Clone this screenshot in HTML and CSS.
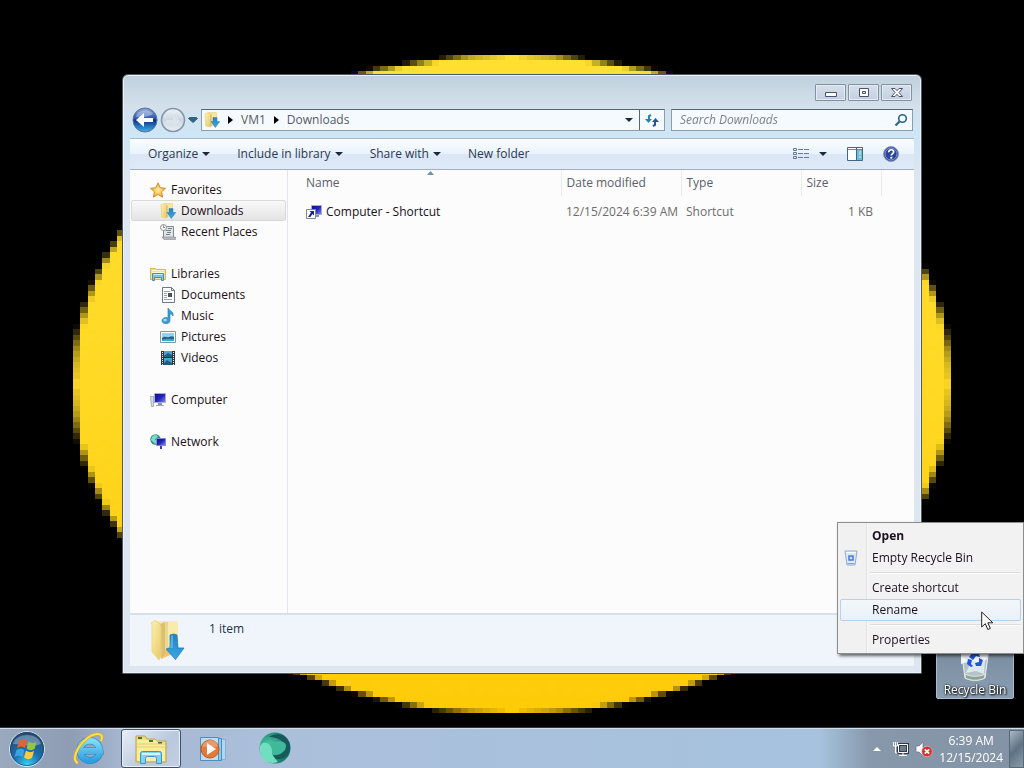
FILE: index.html
```
<!DOCTYPE html>
<html lang="en">
<head>
    <meta charset="UTF-8">
    <meta name="viewport" content="width=device-width, initial-scale=1.0">
    <title>Downloads</title>
    <link rel="stylesheet" href="styles.css">
</head>
<body>
    <svg class="sprite" aria-hidden="true">
        <defs>
            <linearGradient id="g-folder" x1="0" y1="0" x2="1" y2="1">
                <stop offset="0" stop-color="#fdf3b4"/><stop offset="1" stop-color="#e8c965"/>
            </linearGradient>
            <linearGradient id="g-arrow" x1="0" y1="0" x2="0" y2="1">
                <stop offset="0" stop-color="#2a7fc0"/><stop offset="1" stop-color="#35aae8"/>
            </linearGradient>
            <linearGradient id="g-back" x1="0" y1="0" x2="0" y2="1">
                <stop offset="0" stop-color="#8aa8d8"/><stop offset=".45" stop-color="#2c55a8"/>
                <stop offset=".5" stop-color="#0e2f86"/><stop offset="1" stop-color="#3cb4ee"/>
            </linearGradient>
            <linearGradient id="g-fwd" x1="0" y1="0" x2="0" y2="1">
                <stop offset="0" stop-color="#eef3f8"/><stop offset=".5" stop-color="#cbd7e2"/><stop offset="1" stop-color="#e8f0f6"/>
            </linearGradient>
            <linearGradient id="g-screen" x1="0" y1="0" x2="1" y2="1">
                <stop offset="0" stop-color="#10109a"/><stop offset=".5" stop-color="#2222b8"/><stop offset="1" stop-color="#8a90ee"/>
            </linearGradient>
            <radialGradient id="g-orb" cx=".5" cy=".95" r=".9">
                <stop offset="0" stop-color="#35d0f5"/><stop offset=".45" stop-color="#1c6fae"/><stop offset="1" stop-color="#274a72"/>
            </radialGradient>
            <linearGradient id="g-ie" x1="0" y1="0" x2="0" y2="1">
                <stop offset="0" stop-color="#7fdcf8"/><stop offset="1" stop-color="#2d9fe0"/>
            </linearGradient>
            <radialGradient id="g-green" cx=".3" cy=".5" r=".7">
                <stop offset="0" stop-color="#57d8b4"/><stop offset="1" stop-color="#0f6e60"/>
            </radialGradient>
            <radialGradient id="g-star" cx=".5" cy=".5" r=".5">
                <stop offset="0" stop-color="#fff0a0"/><stop offset="1" stop-color="#fba92c"/>
            </radialGradient>
        </defs>
        <symbol id="i-downloads" viewBox="0 0 16 16">
            <path d="M5 .5h7.500v13H5z" fill="#f7e796" stroke="#e2cb76" stroke-width=".5"/>
            <path d="M1 1.500 5 .5 6.500 3v12L1.500 14z" fill="url(#g-folder)" stroke="#dfc87a" stroke-width=".5"/>
            <path d="M6.500 3 7.500 2v12l-1 1z" fill="#cfae5c"/>
            <path d="M9 5.500h4v4h2.800L11.300 15.500 7 9.500h2z" fill="url(#g-arrow)" stroke="#2f7fb8" stroke-width=".5"/>
        </symbol>
        <symbol id="i-libraries" viewBox="0 0 16 16">
            <path d="M.5 2.500h5l1 1h9v10H.5z" fill="#f3e18b" stroke="#cbb765"/>
            <path d="M2 4.500h12M2 6.500h12" stroke="#fff8cf"/>
            <path d="M2.500 7.500h11v7h-2v-3h-7v3h-2z" fill="#7fc3dd" stroke="#4f8fae"/>
            <path d="M3.500 8.500h9" stroke="#c5ecf4"/>
        </symbol>
        <symbol id="i-computer" viewBox="0 0 16 16">
            <path d="M.5 4.500h3v10h-2z" fill="#d7dae5" stroke="#8f94a8" stroke-width=".7"/>
            <path d="M4.500 1.500h11v9h-11z" fill="url(#g-screen)" stroke="#a8add0"/>
            <path d="M8 11h4v2H8z" fill="#8d93a8"/>
            <path d="M6 13.500h8" stroke="#a5aabb"/>
        </symbol>
    </svg>

    <main class="desktop">
        <canvas class="wallpaper" id="wallpaper" width="140" height="140"></canvas>

        <button class="desktop-icon" type="button">
            <svg width="48" height="48" viewBox="0 0 48 48" aria-hidden="true">
                <path d="M9 7h30l-5 37c-5 3-15 3-20 0z" fill="#cbd6dd" fill-opacity=".7" stroke="#e5eef2"/>
                <path d="m10 10 9 5 6-7 6 8 7-5-2 14-6 5-10-3-10 3z" fill="#f1f6f8"/>
                <path d="m13 22 6 8-4 9 10-2 8 3 1-14-6 3z" fill="#dfe8ea"/>
                <path d="m18 23 4-5 6 1 1 4-4-1-3 4zM28 24l4 2-2 6h-5l-1-3 4-1zM17 25l4 1-1 4 2 2-2 1-4-3z" fill="#2154d8"/>
                <path d="M14 40c5 3 15 3 20 0l-.5 4c-5 3-14 3-19 0z" fill="#8fa393" stroke="#dce8e0"/>
            </svg>
            <span>Recycle Bin</span>
        </button>

        <section class="window" aria-label="Downloads">
            <div class="titlebar">
                <button type="button" aria-label="Minimize">
                    <svg width="14" height="10" viewBox="0 0 14 10"><path d="M1.500 4.500h11v4h-11z" fill="#fff" stroke="#4a5270"/></svg>
                </button>
                <button type="button" aria-label="Maximize">
                    <svg width="14" height="10" viewBox="0 0 14 10"><path d="M2.500.5h9v8h-9z" fill="#fff" stroke="#4a5270"/><path d="M5.500 3.500h3v2h-3z" fill="#dfe6ef" stroke="#4a5270"/></svg>
                </button>
                <button type="button" aria-label="Close">
                    <svg width="14" height="10" viewBox="0 0 14 10"><path d="M1.500.5h3.500L7 2.700 9 .5h3.500L9 4.500l3.500 4H9L7 6.300 5 8.500H1.500l3.500-4z" fill="#fff" stroke="#4a5270"/></svg>
                </button>
            </div>

            <div class="navbar">
                <div class="travel">
                    <button type="button" aria-label="Back">
                        <svg width="26" height="26" viewBox="0 0 26 26">
                            <circle cx="13" cy="13" r="12" fill="url(#g-back)" stroke="#5a6f94"/>
                            <path d="M5 7c4-5 12-5 16 0-5 3-11 4-17 3z" fill="#fff" fill-opacity=".35"/>
                            <path d="m4 13 8-7v5h9v4h-9v5z" fill="#fff"/>
                        </svg>
                    </button>
                    <button type="button" aria-label="Forward" disabled>
                        <svg width="26" height="26" viewBox="0 0 26 26">
                            <circle cx="13" cy="13" r="11.500" fill="url(#g-fwd)" stroke="#8494a5" stroke-width="1.500"/>
                            <path d="m20 14-7 6v-4H6v-3h7V9z" fill="#dbe4ec"/>
                        </svg>
                    </button>
                    <button type="button" aria-label="Recent pages">
                        <svg width="10" height="6" viewBox="0 0 10 6"><path d="M.5 1.500 2 .5h6l1.500 1L5 5.500z" fill="#236b83" stroke="#3d5c78"/></svg>
                    </button>
                </div>
                <div class="address">
                    <svg class="icon" aria-hidden="true"><use href="#i-downloads"/></svg>
                    <svg class="crumb-arrow" viewBox="0 0 5 8" aria-hidden="true"><path d="M0 0v8l5-4z"/></svg>
                    <button type="button">VM1</button>
                    <svg class="crumb-arrow" viewBox="0 0 5 8" aria-hidden="true"><path d="M0 0v8l5-4z"/></svg>
                    <button type="button">Downloads</button>
                    <button class="address-drop" type="button" aria-label="Previous locations"><svg class="down" viewBox="0 0 8 4"><path d="M0 0h8L4 4z"/></svg></button>
                    <button class="refresh" type="button" aria-label="Refresh">
                        <svg width="14" height="14" viewBox="0 0 14 14" fill="none" stroke-width="2">
                            <path d="M6 2 4 3v5" stroke="#26889a"/><path d="M0 6h7l-3.500 4z" fill="#26889a"/>
                            <path d="m8 13 2-1V7" stroke="#2453a0"/><path d="M7 9h7l-3.500-4z" fill="#2453a0"/>
                        </svg>
                    </button>
                </div>
                <label class="search">
                    <input type="text" placeholder="Search Downloads" aria-label="Search Downloads">
                    <svg width="14" height="14" viewBox="0 0 14 14" fill="none" aria-hidden="true">
                        <circle cx="8.500" cy="5.500" r="3.800" stroke="#28638a" stroke-width="1.600"/>
                        <path d="M5.500 8.500 1.500 12.500" stroke="#28638a" stroke-width="2.200"/>
                    </svg>
                </label>
            </div>

            <div class="commandbar">
                <button type="button">Organize <svg class="down" viewBox="0 0 8 4"><path d="M0 0h8L4 4z"/></svg></button>
                <button type="button">Include in library <svg class="down" viewBox="0 0 8 4"><path d="M0 0h8L4 4z"/></svg></button>
                <button type="button">Share with <svg class="down" viewBox="0 0 8 4"><path d="M0 0h8L4 4z"/></svg></button>
                <button type="button">New folder</button>
                <div class="view-tools">
                    <button type="button" aria-label="Change your view">
                        <svg width="16" height="14" viewBox="0 0 16 14" fill="none">
                            <path d="M.5 1.500h3v2h-3zM.5 5.500h3v2h-3zM.5 9.500h3v2h-3z" stroke="#68788e"/>
                            <path d="M5 2.500h5m1 0h5M5 6.500h5m1 0h5M5 10.500h5m1 0h5" stroke="#68788e"/>
                        </svg>
                        <svg class="down" viewBox="0 0 8 4"><path d="M0 0h8L4 4z"/></svg>
                    </button>
                    <button type="button" aria-label="Show the preview pane">
                        <svg width="16" height="14" viewBox="0 0 16 14">
                            <path d="M.5.5h15v13H.5z" fill="#fff" stroke="#40668c"/>
                            <path d="M1 2.500h14" stroke="#6c8cab"/><path d="M10 3h5v10h-5z" fill="#6fc0cb"/><path d="M9.500 1v12" stroke="#40668c"/><path d="M12 5h2M12 7h2M12 10h2" stroke="#cdeef0"/>
                        </svg>
                    </button>
                    <button type="button" aria-label="Get help">
                        <svg width="16" height="16" viewBox="0 0 16 16">
                            <circle cx="8" cy="8" r="7.500" fill="#2b4699" stroke="#8c9cc0"/>
                            <circle cx="8" cy="8" r="6" fill="none" stroke="#a6b8e2" stroke-width=".7"/>
                            <path d="M5.700 6.200c0-3.200 5-3.200 5-.4 0 1.900-2.400 1.700-2.400 3.800" fill="none" stroke="#fff" stroke-width="1.700"/>
                            <path d="M7.300 10.800h2v1.800h-2z" fill="#fff"/>
                        </svg>
                    </button>
                </div>
            </div>

            <div class="content">
                <nav class="tree">
                    <ul>
                        <li><a href="#favorites">
                            <svg class="icon" viewBox="0 0 16 16"><path d="m8 .8 2.200 4.900 5.300.6-4 3.600 1.200 5.300L8 12.500l-4.700 2.700 1.200-5.300-4-3.600 5.300-.6z" fill="url(#g-star)" stroke="#c98526" stroke-width=".9"/></svg>
                            Favorites</a>
                            <ul>
                                <li><a class="selected" href="#downloads"><svg class="icon"><use href="#i-downloads"/></svg>Downloads</a></li>
                                <li><a href="#recent">
                                    <svg class="icon" viewBox="0 0 16 16"><path d="M3.500 5v9.500H13.500V2.500H5z" fill="#dfe4e8" stroke="#868c92"/><circle cx="3.500" cy="3.500" r="3" fill="#f4f7f8" stroke="#8a9197"/><path d="M3.500 1.500v2H5M8 4.500h4M6 6.500h5M7 8.500h4M6 10.500h4" fill="none" stroke="#7b8289"/><path d="M2 13h13.500v2.500H4z" fill="#b4babf" stroke="#868c92" stroke-width=".6"/></svg>
                                    Recent Places</a></li>
                            </ul>
                        </li>
                        <li><a href="#libraries"><svg class="icon"><use href="#i-libraries"/></svg>Libraries</a>
                            <ul>
                                <li><a href="#documents">
                                    <svg class="icon" viewBox="0 0 16 16"><path d="M2.500.5h9l3 3v12h-12z" fill="#fff" stroke="#6f7a84"/><path d="M11.500.5v3h3" fill="none" stroke="#6f7a84"/><path d="M4 4.500h6M4 6.500h3M4 8.500h3M4 10.500h3M4 12.500h8" stroke="#97a4b0"/><path d="M8 6h4v4H8z" fill="#46535e"/></svg>
                                    Documents</a></li>
                                <li><a href="#music">
                                    <svg class="icon" viewBox="0 0 16 16"><path d="M8 0c1 3 6 3 5 8-1-2-2-2-3-2v6.500C10 17 1.500 16.500 2 12.500 2.500 9.500 6 9 8 10z" fill="#3a9fd6" stroke="#1e6da8" stroke-width=".6"/><ellipse cx="5" cy="12" rx="1.800" ry="1.300" fill="#9fdcf4"/></svg>
                                    Music</a></li>
                                <li><a href="#pictures">
                                    <svg class="icon" viewBox="0 0 16 16"><path d="M.5 2.500h15v11H.5z" fill="#fff" stroke="#7b98ac"/><path d="M2 4h12v8H2z" fill="#8fd4ee"/><path d="M2 9c3-3 5 0 7-1s4-1 5 0v4H2z" fill="#22688e"/><path d="M2 11c4-2 8 0 12-1v2H2z" fill="#3bb0c9"/></svg>
                                    Pictures</a></li>
                                <li><a href="#videos">
                                    <svg class="icon" viewBox="0 0 16 16"><path d="M1 1h14v14H1z" fill="#263746"/><path d="M4 1h8v6H4zM4 8h8v7H4z" fill="#4ca3cb"/><path d="m4 6 4-3 4 2v2H4zM4 13l3-3 5 3v2H4z" fill="#235d84"/><path d="M2.500 2v13M13.500 2v13" stroke="#edf3f6" stroke-dasharray="1 1"/></svg>
                                    Videos</a></li>
                            </ul>
                        </li>
                        <li><a href="#computer"><svg class="icon"><use href="#i-computer"/></svg>Computer</a></li>
                        <li><a href="#network">
                            <svg class="icon" viewBox="0 0 16 16"><circle cx="5.500" cy="5.500" r="5.200" fill="#268d9c"/><path d="M2 3c3-3 5-2 6 0L5 5l2 3-2 2-4-4z" fill="#7ddcc0"/><path d="M6.500 4.500h9v7h-9z" fill="url(#g-screen)" stroke="#8389d2"/><path d="M10 12h2v3h-2z" fill="#3c3f9c"/></svg>
                            Network</a></li>
                    </ul>
                </nav>
                <div class="files">
                    <table>
                        <thead>
                            <tr>
                                <th class="col-name">Name<svg class="sort" viewBox="0 0 7 4" aria-hidden="true"><path d="M0 4 3.500 0 7 4z"/></svg></th>
                                <th class="col-date">Date modified</th>
                                <th class="col-type">Type</th>
                                <th class="col-size">Size</th>
                            </tr>
                        </thead>
                        <tbody>
                            <tr>
                                <td><span class="file">
                                    <svg class="icon" viewBox="0 0 16 16" aria-hidden="true"><path d="M5.500 1.500h10v9h-10z" fill="url(#g-screen)" stroke="#a8add0"/><path d="M9 11h4v2H9z" fill="#8d93a8"/><path d="M.5 5.500h9v9h-9z" fill="#fff" stroke="#7c8a98"/><path d="M3.500 7H8v4.500L6.500 10 4.300 13H2l3-4.500z" fill="#17277e"/></svg>
                                    Computer - Shortcut</span></td>
                                <td>12/15/2024 6:39 AM</td>
                                <td>Shortcut</td>
                                <td class="size">1 KB</td>
                            </tr>
                        </tbody>
                    </table>
                </div>
            </div>

            <div class="details">
                <svg width="48" height="48" viewBox="0 0 48 48" aria-hidden="true">
                    <path d="M12 5h20q2 0 2 2v28l-16 7z" fill="#f8ebac"/>
                    <path d="M16 8l5-2v32l-4 5z" fill="#dcbf70"/>
                    <path d="M21 6h3v31l-3 2z" fill="#ecd78e"/>
                    <path d="M7 7 11 4.500q6 2 6 6V40l-2 4-7-8V9q0-1.500-1-2z" fill="url(#g-folder)" stroke="#e6d080" stroke-width=".7"/>
                    <path d="M20 36l9-10v12l-12 5z" fill="#f3b55c" fill-opacity=".7"/>
                    <path d="M26 19q4-2 7 0l1 13h6L31.500 43.500 22 33l4-1z" fill="url(#g-arrow)" stroke="#257ab5" stroke-width=".8"/>
                    <path d="M27 20l2-1v13h-3z" fill="#6cc6ef" fill-opacity=".6"/>
                </svg>
                <span>1 item</span>
            </div>
        </section>

        <div class="context-menu" role="menu">
            <button class="default" type="button" role="menuitem">Open</button>
            <button type="button" role="menuitem">
                <svg class="icon" viewBox="0 0 16 16" aria-hidden="true"><path d="M2 1h12l-2 14H4z" fill="#dceaf4" stroke="#8daed0"/><path d="M3 2.500h10" stroke="#fff"/><path d="M6 6h4v4H6z" fill="#cfe0fb" stroke="#4a78d8" stroke-width="1.500"/><path d="M4.500 13.500h7" stroke="#7fa9cf"/></svg>
                Empty Recycle Bin</button>
            <hr>
            <button type="button" role="menuitem">Create shortcut</button>
            <button class="active" type="button" role="menuitem">Rename</button>
            <hr>
            <button type="button" role="menuitem">Properties</button>
        </div>

        <svg class="cursor" viewBox="0 0 13 20" aria-hidden="true"><path d="M.7 1v15l3.600-3.300 2.500 5.800 2.500-1.100-2.500-5.600h5z" fill="#fff" stroke="#222"/></svg>
    </main>

    <footer class="taskbar">
        <button class="start" type="button" aria-label="Start">
            <svg width="38" height="38" viewBox="0 0 38 38">
                <circle cx="19" cy="19" r="17.500" fill="url(#g-orb)" stroke="#d3e6f2"/>
                <circle cx="19" cy="19" r="16.500" fill="none" stroke="#1c3a5c" stroke-opacity=".6"/>
                <path d="M5 14C8 2 30 2 33 14 24 18 14 14 5 14z" fill="#fff" fill-opacity=".3"/>
                <path d="M11 11q4-3 8 0l-2 7q-4-3-8 0z" fill="#ea6030"/>
                <path d="M20.500 11.500q4 3 8 .5l-2 7q-4 2.500-8-.5z" fill="#97c63d"/>
                <path d="M8.500 20q4-3 8 0l-2 7q-4-3-8 0z" fill="#3fa1e0"/>
                <path d="M18 20.500q4 3 8 .5l-2 7q-4 2.500-8-.5z" fill="#fdcb3d"/>
            </svg>
        </button>
        <div class="tasks">
            <button type="button" aria-label="Internet Explorer">
                <svg width="34" height="34" viewBox="0 0 34 34" fill="none">
                    <path d="M27.500 22C22 33 8 29 8 18S26 4 28 19H11" stroke="#2683c4" stroke-width="7"/>
                    <path d="M27.500 22C22 33 8 29 8 18S26 4 28 19H11" stroke="url(#g-ie)" stroke-width="6"/>
                    <path d="M6 31C-4 27 12 2 26 2c4 0 5 3 3 7" stroke="#d9a817" stroke-width="3"/>
                    <path d="M6 31C-4 27 12 2 26 2c4 0 5 3 3 7" stroke="#fbe04b" stroke-width="2"/>
                </svg>
            </button>
            <button class="running" type="button" aria-label="Windows Explorer">
                <svg width="34" height="32" viewBox="0 0 34 32">
                    <path d="M2 3h9l2 3h8l2 2h9v21H2z" fill="#eedb7c" stroke="#b9a550"/>
                    <path d="M3 7h19l2 3h7v18H3z" fill="#f8ee9f"/>
                    <path d="M4 5h4M15 8h4M24 10h4" stroke="#496f3a" stroke-width="2"/>
                    <path d="M3 11h28M3 14h28" stroke="#e2cf6c"/>
                    <path d="M6.500 30.500v-10q0-2 2-2h17q2 0 2 2v10h-5v-5q0-2-2-2h-7q-2 0-2 2v5z" fill="#82d2ee" stroke="#3f94c1"/>
                    <path d="M8 21h18" stroke="#d7f4fb" stroke-width="2"/>
                </svg>
            </button>
            <button type="button" aria-label="Windows Media Player">
                <svg width="30" height="28" viewBox="0 0 30 28">
                    <path d="M10.500 4.500h17v20h-17z" fill="#b2d6ec" stroke="#86b0d4"/>
                    <path d="M6.500 3.500h17v22h-17z" fill="#8fc9ee" stroke="#428fc8"/>
                    <path d="M2.500 2.500h18v23h-18z" fill="#c3d9ec" stroke="#4b8fc4"/>
                    <circle cx="12" cy="14" r="9" fill="#e57a38" stroke="#c4561a"/>
                    <path d="M4 12c2-9 15-9 16-1-5 3-11 0-16 1z" fill="#fff" fill-opacity=".25"/>
                    <path d="m9 8 9 6-9 6z" fill="#fff"/>
                </svg>
            </button>
            <button type="button" aria-label="Browser">
                <svg width="34" height="34" viewBox="0 0 34 34">
                    <circle cx="17" cy="16" r="15.500" fill="url(#g-green)"/>
                    <path d="M11 5C22-3 35 7 31.500 19 28 30 14 29 12 22c9 4 15-2 15-9-3-6-10-8-16-8z" fill="#17585a"/>
                    <path d="M12 12c5-4 16-4 16 2 0 6-7 10-13 8-5-2-5-7-3-10z" fill="#3fb89b"/>
                    <path d="M2 14q3-5 7-3 6 3 5 11 4 6 6 8Q5 34 2 20z" fill="#70dfbf"/>
                </svg>
            </button>
        </div>
        <div class="tray">
            <button class="tray-more" type="button" aria-label="Show hidden icons"><svg width="8" height="4" viewBox="0 0 8 4"><path d="m0 4 4-4 4 4z" fill="#fff"/></svg></button>
            <button type="button" aria-label="Network">
                <svg width="16" height="16" viewBox="0 0 16 16" fill="none">
                    <path d="M5.500 3.500h9v8h-9z" fill="#6c7c8f" stroke="#303b49" stroke-width="3"/><path d="M5.500 3.500h9v8h-9zM10 12v2M6 14.500h8M.5 1v4h4V1M2.500 1v4M2.500 5v7h2" stroke="#fff"/>
                </svg>
            </button>
            <button type="button" aria-label="Volume muted">
                <svg width="18" height="16" viewBox="0 0 18 16">
                    <path d="M1 5h3l4-4v14l-4-4H1z" fill="#fff" stroke="#657184" stroke-width=".7"/>
                    <circle cx="12" cy="10.500" r="5.300" fill="#d5302c" stroke="#f4c1bc" stroke-width=".6"/>
                    <path d="m9.800 8.300 4.400 4.400m0-4.400-4.400 4.400" stroke="#fff" stroke-width="1.700"/>
                </svg>
            </button>
            <button class="clock" type="button"><span>6:39 AM</span><span>12/15/2024</span></button>
            <button class="show-desktop" type="button" aria-label="Show desktop"></button>
        </div>
    </footer>
    <script src="wallpaper.js"></script>
</body>
</html>
```
FILE: styles.css
```
* {
    box-sizing: border-box;
}

body {
    margin: 0;
    height: 100vh;
    display: flex;
    flex-direction: column;
    overflow: hidden;
    background: #000;
    font-family: "Open Sans", "Noto Sans", sans-serif;
    font-size: 12px;
    line-height: 16px;
    color: #1a1020;
}

button {
    margin: 0;
    padding: 0;
    border: 0;
    background: none;
    color: inherit;
    font: inherit;
}

svg {
    display: block;
    flex: none;
}

.sprite {
    position: absolute;
    width: 0;
    height: 0;
}

.icon {
    width: 16px;
    height: 16px;
}

.down {
    width: 8px;
    height: 4px;
    fill: #1c2740;
}

.desktop {
    flex: 1;
    position: relative;
    min-height: 0;
}

.wallpaper {
    position: absolute;
    top: 0;
    left: 0;
    width: 100vw;
    height: 100vh;
    image-rendering: pixelated;
}

.desktop-icon {
    position: absolute;
    right: 10px;
    bottom: 29px;
    width: 78px;
    padding: 2px 2px 0;
    display: flex;
    flex-direction: column;
    align-items: center;
    border: 1px solid #a9bccd;
    border-radius: 2px;
    background: linear-gradient(#75879a, #8a9db1);
    color: #fff;
    white-space: nowrap;
    text-shadow: 1px 1px 2px #000, 0 0 2px #000;
}

/* Explorer window */
.window {
    position: absolute;
    top: 74px;
    right: 102px;
    bottom: 54px;
    left: 122px;
    display: flex;
    flex-direction: column;
    padding: 0 7px 7px;
    border: 1px solid #505a64;
    border-radius: 6px 6px 0 0;
    background: linear-gradient(#bfd0db 0, #d3e0ec 30px, #cfe6f6 62px, #dce5f0 100px, #dce5f0 100%);
    box-shadow: inset 0 0 0 1px #eaf2f8;
}

.titlebar {
    display: flex;
    justify-content: flex-end;
    gap: 2px;
    height: 32px;
    padding: 9px 2px 0 0;
}

.titlebar button {
    display: flex;
    align-items: center;
    justify-content: center;
    width: 31px;
    height: 17px;
    border: 1px solid #8290a6;
    border-radius: 1px;
    background: linear-gradient(#d6e0eb, #c4d0df);
    box-shadow: inset 0 0 0 1px #e3ebf3;
}

.navbar {
    display: flex;
    align-items: center;
    gap: 6px;
    height: 31px;
    padding: 0 1px 6px 2px;
}

.travel {
    display: flex;
    align-items: center;
    gap: 2px;
    margin-right: -3px;
}

.address,
.search {
    display: flex;
    align-items: center;
    height: 22px;
    border: 1px solid #8a9eaf;
    border-top-color: #566572;
    background: #f5fafe;
}

.address {
    flex: 1;
    gap: 8px;
    padding-left: 2px;
    color: #555b66;
}

.crumb-arrow {
    width: 5px;
    height: 8px;
}

.address-drop {
    margin-left: auto;
    padding: 6px 0;
}

.refresh {
    align-self: stretch;
    margin-left: -2px;
    padding: 0 5px;
    border-left: 1px solid #566572;
}

.search {
    width: 31%;
    padding: 0 4px 0 8px;
}

.search input {
    flex: 1;
    min-width: 0;
    padding: 0;
    border: 0;
    outline: 0;
    background: none;
    font: inherit;
}

.search input::placeholder {
    color: #7c838a;
    font-style: italic;
}

.commandbar {
    display: flex;
    align-items: center;
    gap: 27px;
    height: 32px;
    padding: 0 15px 0 18px;
    border-top: 1px solid #a3b8c9;
    border-bottom: 1px solid #a2b0c2;
    background: linear-gradient(#fbfdff, #e9f3fc 50%, #dbe7f6 51%, #dfe9f6);
    color: #2a3752;
}

.commandbar button {
    display: flex;
    align-items: center;
    gap: 4px;
}

.view-tools {
    display: flex;
    align-items: center;
    gap: 20px;
    margin-left: auto;
}

.view-tools button {
    gap: 10px;
}

.content {
    flex: 1;
    display: flex;
    min-height: 0;
    background: #fcfcfc;
}

.tree {
    width: 158px;
    padding: 9px 1px 0;
    border-right: 1px solid #dfe5ee;
}

.tree ul {
    margin: 0;
    padding: 0;
    list-style: none;
}

.tree > ul > li {
    margin-bottom: 21px;
}

.tree a {
    display: flex;
    align-items: center;
    gap: 5px;
    height: 21px;
    padding-left: 18px;
    border: 1px solid transparent;
    border-radius: 2px;
    color: inherit;
    text-decoration: none;
    white-space: nowrap;
}

.tree ul ul a {
    padding-left: 28px;
}

.tree a.selected {
    border-color: #d9d9d9;
    background: linear-gradient(#f9f9f9, #e4e4e4);
}

.files {
    flex: 1;
    padding-left: 13px;
}

table {
    border-collapse: collapse;
    table-layout: fixed;
    width: 580px;
    color: #6d6d6d;
}

th {
    height: 26px;
    padding: 0 5px;
    border-right: 1px solid #e6ebf0;
    color: #5a6068;
    font-weight: normal;
    text-align: left;
}

td {
    height: 32px;
    padding: 0 5px;
    white-space: nowrap;
}

.col-name {
    position: relative;
    width: 260px;
}

.col-date,
.col-type {
    width: 120px;
}

.col-size {
    width: 80px;
}

.sort {
    position: absolute;
    top: 1px;
    left: calc(50% - 4px);
    width: 7px;
    height: 4px;
    fill: #6d93aa;
}

.file {
    display: flex;
    align-items: center;
    gap: 4px;
    color: #1a1020;
}

.size {
    padding-right: 8px;
    text-align: right;
}

.details {
    display: flex;
    gap: 17px;
    height: 53px;
    padding: 1px 14px;
    border-top: 2px solid #d5e0ea;
    background: #f0f5fb;
    color: #2a3346;
}

.details span {
    padding-top: 5px;
}

/* Context menu */
.context-menu {
    position: absolute;
    right: 0;
    bottom: 74px;
    width: 187px;
    padding: 2px;
    border: 1px solid #8d8d8d;
    background: linear-gradient(90deg, #f1f1f1 28px, #e2e3e3 28px, #e2e3e3 29px, #fff 29px, #f2f2f2 30px);
    box-shadow: 2px 2px 3px rgba(0, 0, 0, 0.6);
}

.context-menu button {
    display: flex;
    align-items: center;
    gap: 13px;
    width: 100%;
    height: 22px;
    padding-left: 31px;
    border: 1px solid transparent;
    border-radius: 2px;
    white-space: nowrap;
}

.context-menu button:has(.icon) {
    padding-left: 2px;
}

.context-menu .default {
    font-weight: bold;
}

.context-menu .active {
    border-color: #b4d2e8;
    background: linear-gradient(#f3f7fb, #e9f0f7);
}

.context-menu hr {
    height: 2px;
    margin: 3px 0 3px 30px;
    border: 0;
    border-top: 1px solid #dedede;
    border-bottom: 1px solid #fff;
}

.cursor {
    position: absolute;
    right: 30px;
    bottom: 97px;
    width: 13px;
    height: 20px;
}

/* Taskbar */
.taskbar {
    position: relative;
    display: flex;
    height: 40px;
    border-top: 1px solid #d3deea;
    background: linear-gradient(90deg, #9aa9bd 0, #8e9db4 70px, #a5b5cf 120px, #abbfda 250px, #a6c2de 820px, #8798ab 870px, #8393a5 100%);
    box-shadow: 0 -1px 0 #2a3a4a;
}

.start {
    display: flex;
    align-items: center;
    justify-content: center;
    width: 54px;
}

.tasks {
    display: flex;
    flex: 1;
    gap: 2px;
    padding-left: 5px;
}

.tasks button {
    display: flex;
    align-items: center;
    justify-content: center;
    width: 60px;
}

.tasks .running {
    border: 1px solid #41506a;
    border-radius: 3px;
    background: linear-gradient(135deg, #e9eef5, #b9c8dd 60%, #c3d0e2);
    box-shadow: inset 0 0 0 1px #e8eff8;
}

.tray {
    display: flex;
    align-items: center;
    gap: 6px;
    padding-top: 1px;
    color: #fff;
}

.tray-more {
    margin-right: 6px;
}

.clock {
    display: flex;
    flex-direction: column;
    gap: 1px;
    align-items: center;
}

.show-desktop {
    align-self: stretch;
    width: 15px;
    border: 1px solid #56697a;
    background: linear-gradient(135deg, #a8b8c6, #5f7283 50%, #8a9bab);
}
```
FILE: wallpaper.js
```
// low resolution disc, stretched to the screen by the stylesheet
const canvas = document.getElementById('wallpaper');
const ctx = canvas.getContext('2d');

const fill = ctx.createLinearGradient(0, 10, 0, 130);
fill.addColorStop(0, '#ffe030');
fill.addColorStop(0.5, '#ffd924');
fill.addColorStop(1, '#fdcb08');

ctx.fillStyle = fill;
ctx.beginPath();
ctx.arc(70, 70, 60, 0, Math.PI * 2);
ctx.fill();
```
